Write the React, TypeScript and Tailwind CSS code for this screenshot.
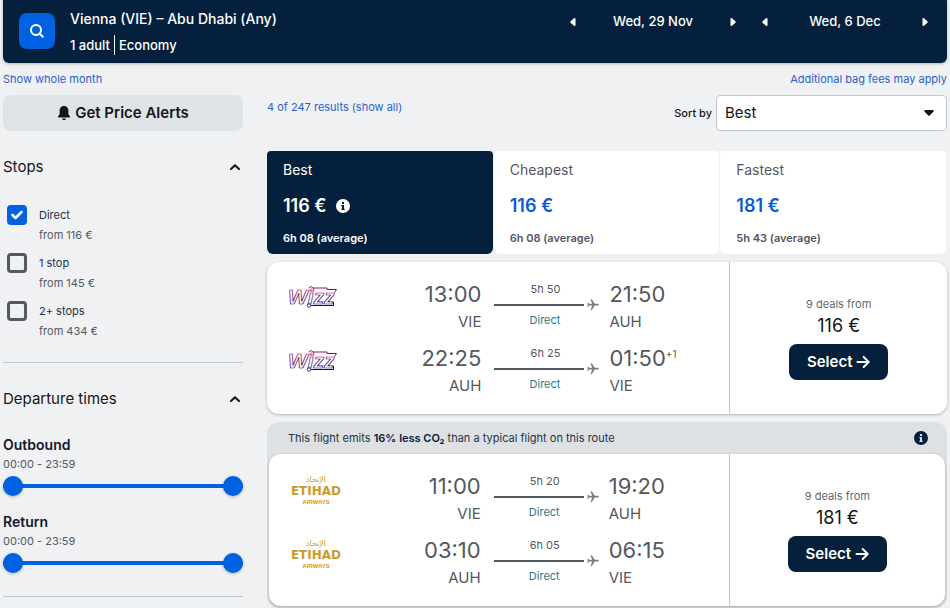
import { useId, useState } from "react";
import clsx from "clsx";
import { MdFlight } from "react-icons/md";

type Leg = {
  from: string;
  to: string;
  departs: string;
  arrives: string;
  dayOffset?: string;
  duration: string;
};

type Airline = "wizz" | "etihad";

type Itinerary = {
  airline: Airline;
  price: string;
  legs: Leg[];
};

const STOPS = [
  { id: "direct", label: "Direct", price: "from 116 €" },
  { id: "one", label: "1 stop", price: "from 145 €" },
  { id: "two", label: "2+ stops", price: "from 434 €" },
];

const TABS = [
  { id: "best", label: "Best", price: "116 €", average: "6h 08 (average)" },
  { id: "cheapest", label: "Cheapest", price: "116 €", average: "6h 08 (average)" },
  { id: "fastest", label: "Fastest", price: "181 €", average: "5h 43 (average)" },
];

const WIZZ: Itinerary = {
  airline: "wizz",
  price: "116 €",
  legs: [
    { from: "VIE", to: "AUH", departs: "13:00", arrives: "21:50", duration: "5h 50" },
    { from: "AUH", to: "VIE", departs: "22:25", arrives: "01:50", dayOffset: "+1", duration: "6h 25" },
  ],
};

const ETIHAD: Itinerary = {
  airline: "etihad",
  price: "181 €",
  legs: [
    { from: "VIE", to: "AUH", departs: "11:00", arrives: "19:20", duration: "5h 20" },
    { from: "AUH", to: "VIE", departs: "03:10", arrives: "06:15", duration: "6h 05" },
  ],
};

export default function App() {
  return (
    <div className="min-h-screen bg-[#eff1f2] px-[3px] font-['Inter',sans-serif] text-[#161616]">
      <Header />
      <div className="flex justify-between pt-2 text-[11px] leading-4 text-[#2b5fce]">
        <a href="#month">Show whole month</a>
        <a href="#bags">Additional bag fees may apply</a>
      </div>
      <div className="flex gap-6 pt-2">
        <Filters />
        <main className="min-w-0 flex-1">
          <div className="flex items-start justify-between">
            <a href="#all" className="pt-1 text-[11px] leading-4 text-[#2b5fce]">
              4 of 247 results (show all)
            </a>
            <SortBy />
          </div>
          <SortTabs />
          <section className="mt-2 rounded-xl bg-white shadow-[0_1px_3px_rgba(37,32,31,0.3)]">
            <Ticket itinerary={WIZZ} />
          </section>
          <section className="mt-2 rounded-xl bg-[#dde1e4] px-[2px] pb-[2px]">
            <div className="flex h-8 items-center justify-between pr-4 pl-[19px] text-[11px] text-[#243346]">
              <p>
                This flight emits{" "}
                <strong className="font-semibold text-[#05203c]">16% less CO₂</strong> than a
                typical flight on this route
              </p>
              <InfoIcon className="size-4 text-[#05203c]" />
            </div>
            <div className="rounded-xl bg-white shadow-[0_1px_3px_rgba(37,32,31,0.3)]">
              <Ticket itinerary={ETIHAD} />
            </div>
          </section>
        </main>
      </div>
    </div>
  );
}

function Header() {
  return (
    <header className="flex h-[63px] rounded-b-md bg-[#05203c] pl-4 text-white shadow-[0_1px_3px_rgba(37,32,31,0.3)]">
      <button
        type="button"
        aria-label="Search"
        className="mt-[13px] grid size-9 place-items-center rounded-lg bg-[#0062e3]"
      >
        <svg viewBox="0 0 16 16" className="size-4" fill="none" stroke="currentColor" strokeWidth="2">
          <circle cx="7" cy="7" r="5" />
          <path d="M10.500 10.500l3.300 3.300" strokeLinecap="round" />
        </svg>
      </button>
      <div className="flex-1 pt-2 pl-[15px]">
        <h1 className="text-sm leading-[22px] font-medium">Vienna (VIE) – Abu Dhabi (Any)</h1>
        <p className="flex pt-[5px] text-[13px] leading-5 font-medium">
          <span className="border-r border-white pr-1">1 adult</span>
          <span className="pl-1">Economy</span>
        </p>
      </div>
      <div className="flex gap-4 pt-3 pr-3.5">
        <DateStepper date="Wed, 29 Nov" />
        <DateStepper date="Wed, 6 Dec" />
      </div>
    </header>
  );
}

function DateStepper({ date }: { date: string }) {
  return (
    <div className="flex h-5 w-44 items-center justify-between text-[13px] font-medium">
      <button type="button" aria-label="Previous day" className="p-1">
        <TriangleIcon className="size-2 rotate-180" />
      </button>
      <span>{date}</span>
      <button type="button" aria-label="Next day" className="p-1">
        <TriangleIcon className="size-2" />
      </button>
    </div>
  );
}

function Filters() {
  return (
    <aside className="w-60 shrink-0">
      <button
        type="button"
        className="flex h-9 w-full items-center justify-center gap-1 rounded-lg bg-[#dfe3e5] text-[15px] font-semibold"
      >
        <svg viewBox="0 0 14 16" className="h-4 w-3.5" fill="currentColor">
          <path d="M7 1C4 1 2.600 3.300 2.600 6v3.200L1.100 11.300c-.4.6 0 1.200.6 1.200h10.600c.6 0 1-.6.6-1.200L11.400 9.200V6C11.400 3.300 10 1 7 1z" />
          <path d="M5 13.500h4c-.2 1-1 1.500-2 1.500s-1.800-.5-2-1.500z" />
        </svg>
        Get Price Alerts
      </button>

      <section className="border-b border-[#c1c7cf] pt-6 pb-[21px]">
        <FilterHeading title="Stops" />
        <ul className="flex flex-col gap-2 pt-[26px] pl-1">
          {STOPS.map((stop) => (
            <StopOption key={stop.id} {...stop} />
          ))}
        </ul>
      </section>

      <section className="border-b border-[#c1c7cf] pt-6 pb-[23px]">
        <FilterHeading title="Departure times" />
        <div className="flex flex-col gap-4 pt-6">
          <TimeRange label="Outbound" />
          <TimeRange label="Return" />
        </div>
      </section>
    </aside>
  );
}

function FilterHeading({ title }: { title: string }) {
  return (
    <h2>
      <button
        type="button"
        aria-expanded
        className="flex w-full items-center justify-between pr-[3px] text-[15px] leading-6"
      >
        {title}
        <svg viewBox="0 0 10 6" className="h-1.5 w-2.5" fill="none" stroke="currentColor" strokeWidth="2">
          <path d="M1 5l4-3.800L9 5" strokeLinecap="round" strokeLinejoin="round" />
        </svg>
      </button>
    </h2>
  );
}

function StopOption({ id, label, price }: { id: string; label: string; price: string }) {
  const [checked, setChecked] = useState(id === "direct");
  return (
    <li>
      <label className="flex h-10 gap-3">
        <span className="grid size-5 place-items-center">
          <input
            type="checkbox"
            checked={checked}
            onChange={(event) => setChecked(event.target.checked)}
            className="col-start-1 row-start-1 size-5 appearance-none rounded border-[3px] border-[#545860] checked:border-[#0062e3] checked:bg-[#0062e3]"
          />
          {checked && (
            <svg
              viewBox="0 0 12 10"
              className="pointer-events-none col-start-1 row-start-1 h-2.5 w-3 text-white"
              fill="none"
              stroke="currentColor"
              strokeWidth="2.500"
            >
              <path d="M1.500 5l3 3 6-6" strokeLinecap="round" strokeLinejoin="round" />
            </svg>
          )}
        </span>
        <span className="text-[11px] leading-5 text-[#545860]">
          <span className="block text-[#243346]">{label}</span>
          <span className="block">{price}</span>
        </span>
      </label>
    </li>
  );
}

const DAY_END = 1439;

function TimeRange({ label }: { label: string }) {
  const [start, setStart] = useState(0);
  const [end, setEnd] = useState(DAY_END);

  // Both inputs share one grid cell. Only the thumbs take the pointer,
  // otherwise the top input would cover the lower one.
  const input =
    "pointer-events-none col-start-1 row-start-1 h-5 w-full appearance-none bg-transparent [&::-webkit-slider-thumb]:pointer-events-auto [&::-webkit-slider-thumb]:size-5 [&::-webkit-slider-thumb]:appearance-none [&::-webkit-slider-thumb]:rounded-full [&::-webkit-slider-thumb]:bg-[#0062e3] [&::-webkit-slider-thumb]:shadow-[0_1px_3px_rgba(37,32,31,0.3)]";

  return (
    <div>
      <h3 className="text-sm leading-5 font-semibold text-[#161630]">{label}</h3>
      <p className="text-[11px] leading-[18px] text-[#545860]">
        {formatTime(start)} - {formatTime(end)}
      </p>
      <div className="mt-[3px] grid items-center">
        <span className="col-start-1 row-start-1 h-1 bg-[#0062e3]" />
        <input
          type="range"
          aria-label={`${label} earliest`}
          min={0}
          max={DAY_END}
          value={start}
          onChange={(event) => setStart(Math.min(Number(event.target.value), end))}
          className={input}
        />
        <input
          type="range"
          aria-label={`${label} latest`}
          min={0}
          max={DAY_END}
          value={end}
          onChange={(event) => setEnd(Math.max(Number(event.target.value), start))}
          className={input}
        />
      </div>
    </div>
  );
}

function formatTime(minutes: number) {
  const hours = String(Math.floor(minutes / 60)).padStart(2, "0");
  return `${hours}:${String(minutes % 60).padStart(2, "0")}`;
}

function SortBy() {
  const id = useId();
  return (
    <div className="flex items-center gap-1">
      <label htmlFor={id} className="text-[11px] font-medium">
        Sort by
      </label>
      <div className="grid w-[231px] items-center">
        <select
          id={id}
          className="col-start-1 row-start-1 h-9 w-full appearance-none rounded border border-[#c1c7cf] bg-white px-2 text-[15px]"
        >
          <option>Best</option>
          <option>Cheapest</option>
          <option>Fastest</option>
        </select>
        <svg
          viewBox="0 0 10 6"
          className="pointer-events-none col-start-1 row-start-1 mr-[13px] h-1.5 w-2.5 justify-self-end"
          fill="currentColor"
        >
          <path d="M1.200 0h7.600c.9 0 1.300 1 .7 1.600L5.700 5.600c-.4.4-1 .4-1.400 0L.5 1.600C-.1 1 .3 0 1.200 0z" />
        </svg>
      </div>
    </div>
  );
}

function SortTabs() {
  const [active, setActive] = useState("best");
  return (
    <div role="tablist" className="mt-5 mr-px grid grid-cols-3 gap-px">
      {TABS.map((tab) => {
        const selected = tab.id === active;
        return (
          <button
            key={tab.id}
            type="button"
            role="tab"
            aria-selected={selected}
            onClick={() => setActive(tab.id)}
            className={clsx(
              "rounded-t rounded-b-md px-4 pt-[9px] pb-2 text-left",
              selected ? "bg-[#05203c] text-white" : "bg-white text-[#545860]"
            )}
          >
            <span className="block text-sm leading-5">{tab.label}</span>
            <span
              className={clsx(
                "mt-3 flex items-center gap-2 text-lg leading-7 font-semibold",
                !selected && "text-[#0c5bd6]"
              )}
            >
              {tab.price}
              {selected && <InfoIcon className="size-4" />}
            </span>
            <span className="mt-2.5 block text-[11px] leading-4 font-semibold">{tab.average}</span>
          </button>
        );
      })}
    </div>
  );
}

function Ticket({ itinerary }: { itinerary: Itinerary }) {
  return (
    <div className="flex">
      <div className="flex flex-1 flex-col gap-2 py-4 pl-5">
        {itinerary.legs.map((leg) => (
          <LegRow key={leg.departs} leg={leg} airline={itinerary.airline} />
        ))}
      </div>
      <div className="flex w-[32%] flex-col items-center justify-center border-l border-[#c1c7cf]">
        <span className="text-[11px] leading-5 text-[#626971]">9 deals from</span>
        <span className="text-lg leading-6">{itinerary.price}</span>
        <button
          type="button"
          className="mt-1.5 mb-0.5 flex h-9 items-center gap-1 rounded-lg bg-[#05203c] px-[18px] text-[15px] font-semibold text-white"
        >
          Select
          <svg viewBox="0 0 14 14" className="size-3.5" fill="none" stroke="currentColor" strokeWidth="2">
            <path d="M1.500 7h11M7.700 2l5 5-5 5" strokeLinecap="round" strokeLinejoin="round" />
          </svg>
        </button>
      </div>
    </div>
  );
}

function LegRow({ leg, airline }: { leg: Leg; airline: Airline }) {
  return (
    <div className="flex text-[#545860]">
      <div className="flex w-14 items-start">
        {airline === "wizz" ? <WizzLogo /> : <EtihadLogo />}
      </div>
      <div className="flex-1 text-right">
        <div className="text-[22px] leading-8">{leg.departs}</div>
        <div className="text-[15px] leading-6">{leg.from}</div>
      </div>
      <div className="ml-[13px] w-[106px] pt-[3px] text-[11px] leading-4">
        <div className="pr-10 text-right">{leg.duration}</div>
        <div className="flex h-[15px] items-center justify-between">
          <span className="h-0.5 w-[90px] bg-[#545860]" />
          <MdFlight aria-hidden className="size-3.5 rotate-90 text-[#7b7d8c]" />
        </div>
        <div className="pr-10 text-right text-[#2f7680]">Direct</div>
      </div>
      <div className="ml-[9px] w-[120px]">
        <div className="flex text-[22px] leading-8">
          {leg.arrives}
          {leg.dayOffset && <sup className="top-0 pt-1 text-[10px] leading-4">{leg.dayOffset}</sup>}
        </div>
        <div className="text-[15px] leading-6">{leg.to}</div>
      </div>
    </div>
  );
}

function InfoIcon({ className }: { className?: string }) {
  return (
    <svg viewBox="0 0 24 24" className={className} fill="currentColor" aria-hidden>
      <path d="M12 1.500a10.500 10.500 0 1 0 0 21 10.500 10.500 0 0 0 0-21zM10.500 6h3v3h-3V6zM9.500 10.500h4V16h1v2h-5v-2h1v-3.500h-1v-2z" />
    </svg>
  );
}

function TriangleIcon({ className }: { className?: string }) {
  return (
    <svg viewBox="0 0 8 8" className={className} fill="currentColor" aria-hidden>
      <path d="M1.500.8v6.400c0 .8.900 1.100 1.500.6l3.400-3.100c.4-.4.4-1 0-1.400L3 .2C2.400-.3 1.500 0 1.500.8z" />
    </svg>
  );
}

function WizzLogo() {
  const id = useId();
  return (
    <svg viewBox="0 0 52 24" className="mt-1.5 h-6 w-[52px] shrink-0" role="img" aria-label="Wizz">
      <defs>
        <linearGradient id={id} gradientUnits="userSpaceOnUse" x1="0" y1="0" x2="0" y2="22">
          <stop offset="0.200" stopColor="#b0006e" />
          <stop offset="0.850" stopColor="#16086e" />
        </linearGradient>
      </defs>
      <g fill="none" stroke={`url(#${id})`}>
        <text
          x="1"
          y="20"
          fontFamily="Liberation Sans, sans-serif"
          fontSize="21"
          fontWeight="700"
          fontStyle="italic"
          strokeWidth="0.700"
        >
          Wizz
        </text>
        <path d="M22 4l2-1.500 2 1.500h14v1.500h9.500l-2 3M24 21.500h22.500v-3.500" strokeWidth="1" />
        <circle cx="22" cy="21.500" r="1.800" strokeWidth="0.800" />
      </g>
    </svg>
  );
}

function EtihadLogo() {
  return (
    <svg
      viewBox="0 -3 54 32"
      className="mt-1 h-8 w-[54px] shrink-0"
      role="img"
      aria-label="Etihad Airways"
      fill="#c79a2c"
      textAnchor="middle"
    >
      <text x="27" y="5" fontFamily="DejaVu Sans, sans-serif" fontSize="8">
        الإتحاد
      </text>
      <text x="27" y="18" fontFamily="DejaVu Sans, sans-serif" fontSize="12" fontWeight="700">
        ETIHAD
      </text>
      <text x="27" y="27" fontFamily="Liberation Sans, sans-serif" fontSize="6" fontWeight="700">
        AIRWAYS
      </text>
    </svg>
  );
}
